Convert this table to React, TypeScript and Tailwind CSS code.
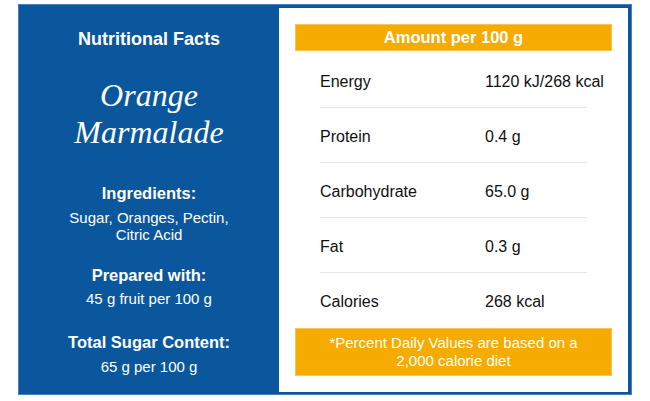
const nutrients = [
  { label: "Energy", value: "1120 kJ/268 kcal" },
  { label: "Protein", value: "0.4 g" },
  { label: "Carbohydrate", value: "65.0 g" },
  { label: "Fat", value: "0.3 g" },
  { label: "Calories", value: "268 kcal" },
]

export default function App() {
  return (
    <div
      className="w-[650px] h-[401px] bg-white pt-[4px] pl-[18px]"
      style={{ fontFamily: '"Liberation Sans", Arial, sans-serif' }}
    >
      <div className="w-[614px] h-[391px] flex bg-[#0b579e] border border-[#4a7fbb] pt-[3px] pr-[3px] pb-[2px]">
        {/* Left: product info */}
        <div className="w-[260px] flex flex-col items-center text-white text-center">
          <h2 className="mt-[21px] text-[18px] leading-[20px] font-bold">Nutritional Facts</h2>
          <h1
            className="mt-[28px] text-[32px] leading-[37px] italic"
            style={{ fontFamily: '"Liberation Serif", "Times New Roman", serif' }}
          >
            Orange
            <br />
            Marmalade
          </h1>
          <h3 className="mt-[32px] text-[16.5px] leading-[20px] font-bold">Ingredients:</h3>
          <p className="mt-[6px] text-[15px] leading-[17px]">
            Sugar, Oranges, Pectin,
            <br />
            Citric Acid
          </p>
          <h3 className="mt-[22px] text-[16.5px] leading-[20px] font-bold">Prepared with:</h3>
          <p className="mt-[5px] text-[15px] leading-[17px]">45 g fruit per 100 g</p>
          <h3 className="mt-[25px] text-[16.5px] leading-[20px] font-bold">Total Sugar Content:</h3>
          <p className="mt-[6px] text-[15px] leading-[17px]">65 g per 100 g</p>
        </div>

        {/* Right: nutrition table */}
        <div className="flex-1 bg-white p-4 flex flex-col">
          <div className="h-[27px] bg-[#f6ab00] border border-[#f8c450] flex items-center justify-center text-white font-bold text-[16.5px]">
            Amount per 100 g
          </div>
          <div className="mt-[2px] mx-[25px] w-[267px]">
            {nutrients.map((n, i) => (
              <div
                key={n.label}
                className={`h-[55px] pt-[3px] flex items-center text-[16px] text-[#111] ${
                  i < nutrients.length - 1 ? "border-b border-[#e8e8e8]" : ""
                }`}
              >
                <span className="w-[165px] shrink-0">{n.label}</span>
                <span className="whitespace-nowrap">{n.value}</span>
              </div>
            ))}
          </div>
          <div className="h-[48px] bg-[#f6ab00] border border-[#f8c450] flex items-center justify-center text-center text-white text-[15px] leading-[18px]">
            <p>
              *Percent Daily Values are based on a
              <br />
              2,000 calorie diet
            </p>
          </div>
        </div>
      </div>
    </div>
  )
}
